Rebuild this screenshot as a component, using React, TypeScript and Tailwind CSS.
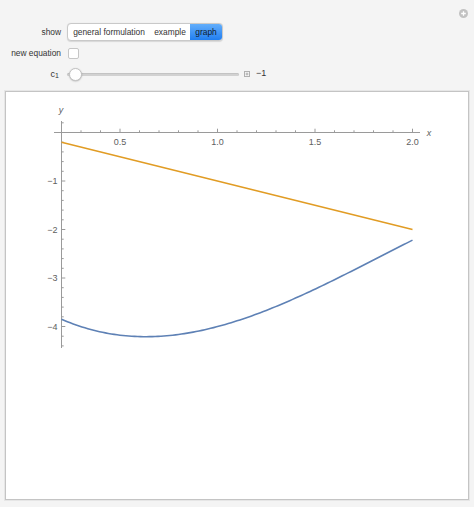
import React from "react";

// plot mapping: data -> page pixels
const X = (x: number) => 61.5 + (x - 0.2) * 195;
const Y = (y: number) => 132.5 - y * 48.5;

// smooth fit of the blue solution (newton form through read-off points)
const blue = (t: number) =>
  -3.85 -
  0.857 * (t - 0.2) +
  1.699 * (t - 0.2) * (t - 0.62) -
  0.478 * (t - 0.2) * (t - 0.62) * (t - 1.118);

function curvePath(f: (x: number) => number, a: number, b: number, n = 120) {
  let d = "";
  for (let i = 0; i <= n; i++) {
    const x = a + ((b - a) * i) / n;
    d += `${i === 0 ? "M" : "L"}${X(x).toFixed(2)},${Y(f(x)).toFixed(2)} `;
  }
  return d;
}

function Plot() {
  const xMinor: number[] = [];
  for (let i = 3; i <= 19; i++) if (i % 5 !== 0) xMinor.push(i / 10);
  const xMajor = [0.5, 1.0, 1.5, 2.0];
  const yMinor: number[] = [];
  for (let i = 2; i >= -44; i -= 2) if (i % 10 !== 0) yMinor.push(i / 10);
  const yMajor = [-1, -2, -3, -4];

  return (
    <svg width={462} height={407} viewBox="6 92 462 407" className="block">
      {/* axes */}
      <line x1={54} y1={132.5} x2={420} y2={132.5} stroke="#9a9a9a" strokeWidth={1} />
      <line x1={61.5} y1={121} x2={61.5} y2={348} stroke="#9a9a9a" strokeWidth={1} />

      {xMinor.map((v) => (
        <line key={`xm${v}`} x1={X(v)} y1={132.5} x2={X(v)} y2={130.3} stroke="#9a9a9a" strokeWidth={1} />
      ))}
      {xMajor.map((v) => (
        <line key={`xM${v}`} x1={X(v)} y1={132.5} x2={X(v)} y2={128.7} stroke="#9a9a9a" strokeWidth={1} />
      ))}
      {yMinor.map((v) => (
        <line key={`ym${v}`} x1={61.5} y1={Y(v)} x2={63.7} y2={Y(v)} stroke="#9a9a9a" strokeWidth={1} />
      ))}
      {yMajor.map((v) => (
        <line key={`yM${v}`} x1={61.5} y1={Y(v)} x2={65.3} y2={Y(v)} stroke="#9a9a9a" strokeWidth={1} />
      ))}

      <g fontFamily="'Liberation Sans', Arial, sans-serif" fontSize={9} fill="#606060">
        {xMajor.map((v) => (
          <text key={`xl${v}`} x={X(v)} y={144.5} textAnchor="middle">
            {v.toFixed(1)}
          </text>
        ))}
        {yMajor.map((v) => (
          <text key={`yl${v}`} x={57.5} y={Y(v) + 3.2} textAnchor="end">
            {`\u2212${-v}`}
          </text>
        ))}
        <text x={61} y={113} textAnchor="middle" fontStyle="italic">
          y
        </text>
        <text x={429} y={136} textAnchor="middle" fontStyle="italic">
          x
        </text>
      </g>

      {/* curves */}
      <line x1={X(0.2)} y1={Y(-0.2)} x2={X(2)} y2={Y(-2)} stroke="#e19c24" strokeWidth={1.6} />
      <path d={curvePath(blue, 0.2, 2.0)} fill="none" stroke="#5e81b5" strokeWidth={1.6} />
    </svg>
  );
}

export default function App() {
  return (
    <div
      className="h-[507px] w-[474px] bg-[#f4f4f4] text-[#333]"
      style={{ fontFamily: "'Liberation Sans', Arial, sans-serif" }}
    >
      <div className="flex h-[23px] items-start justify-end pr-[6px] pt-[9px]">
        <svg width={9} height={9} viewBox="0 0 9 9">
          <circle cx={4.5} cy={4.5} r={4.5} fill="#c2c2c2" />
          <path d="M4.5 2.2v4.6M2.2 4.5h4.6" stroke="#fff" strokeWidth={1.3} />
        </svg>
      </div>

      {/* show */}
      <div className="flex h-[18px] items-center">
        <div className="w-[61px] text-right text-[8.4px]">show</div>
        <div className="ml-[6px] flex h-[18px] overflow-hidden rounded-[4px] border border-[#c9c9c9] bg-white text-[8.4px] shadow-[0_0.5px_1px_rgba(0,0,0,0.12)]">
          <div className="flex w-[82px] items-center justify-center">general formulation</div>
          <div className="flex w-[40px] items-center justify-center">example</div>
          <div className="flex w-[32px] items-center justify-center bg-linear-to-b from-[#62aefb] to-[#1f7ef0] text-[#0d1a2e]">
            graph
          </div>
        </div>
      </div>

      {/* new equation */}
      <div className="mt-[5px] flex h-[14px] items-center">
        <div className="w-[61px] text-right text-[8.4px]">new equation</div>
        <div className="ml-[7px] h-[11px] w-[11px] rounded-[2px] border border-[#c6c6c6] bg-white" />
      </div>

      {/* c1 slider */}
      <div className="mt-[7px] flex h-[14px] items-center">
        <div className="w-[61px] pr-[2px] text-right text-[9px] leading-none">
          c<sub className="text-[7px]">1</sub>
        </div>
        <div className="relative ml-[6px] flex h-[14px] w-[172px] items-center">
          <div className="h-[3px] w-full rounded-full bg-[#d3d3d3] shadow-[inset_0_0.5px_1px_rgba(0,0,0,0.15)]" />
          <div className="absolute left-[1.5px] top-[0.5px] h-[13px] w-[13px] rounded-full border border-[#c2c2c2] bg-white shadow-[0_0.5px_1.5px_rgba(0,0,0,0.25)]" />
        </div>
        <svg width={6} height={6} viewBox="0 0 6 6" className="ml-[5px]">
          <rect x={0.5} y={0.5} width={5} height={5} fill="#f4f4f4" stroke="#b0b0b0" strokeWidth={1} />
          <path d="M3 1.6v2.8M1.6 3h2.8" stroke="#a0a0a0" strokeWidth={0.8} />
        </svg>
        <span className="ml-[6px] text-[9px]">{"\u22121"}</span>
      </div>

      {/* plot panel */}
      <div className="ml-[5px] mt-[10px] h-[409px] w-[464px] border border-[#c4c4c4] bg-white shadow-[0_0_0_1px_#e6e6e6]">
        <Plot />
      </div>
    </div>
  );
}
